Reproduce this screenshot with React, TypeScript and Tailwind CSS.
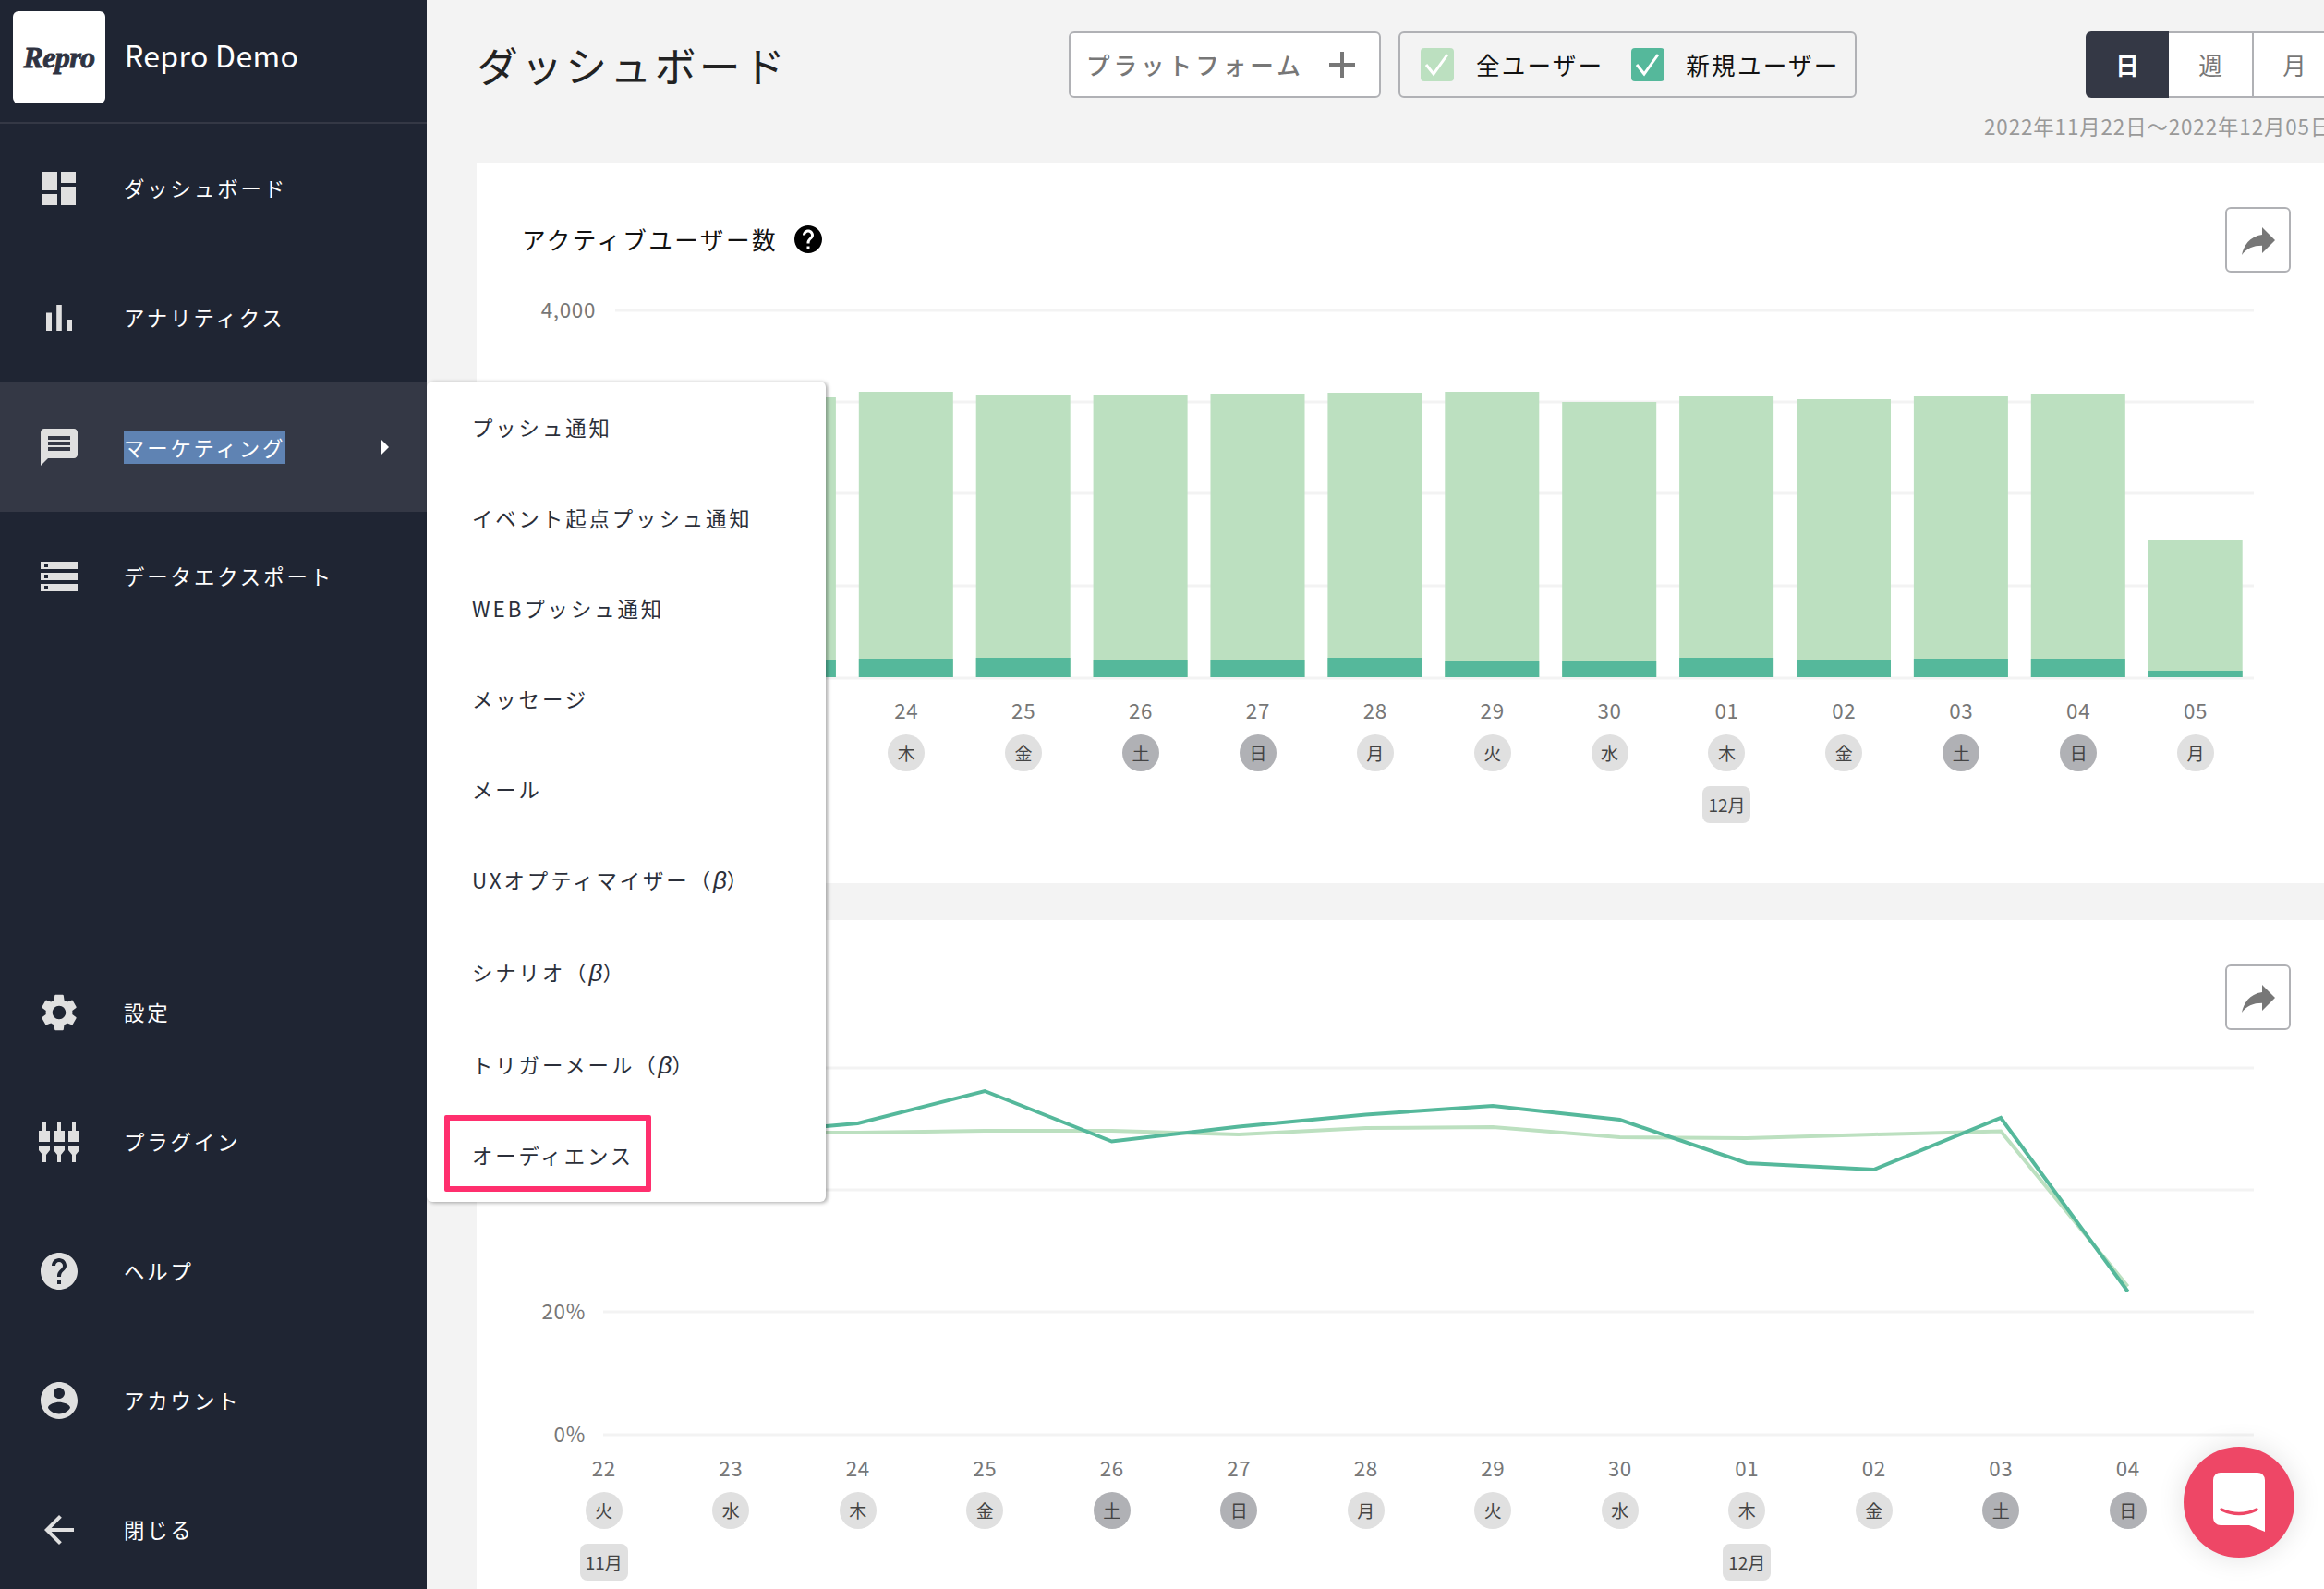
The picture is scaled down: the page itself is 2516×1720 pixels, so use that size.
import type { ReactNode } from "react"

// material icon paths, 24 unit box
const icons = {
  dashboard: "M3 13h8V3H3v10zm0 8h8v-6H3v6zm10 0h8V11h-8v10zm0-18v6h8V3h-8z",
  bars: "M5 9.2h3V19H5zM10.6 5h2.8v14h-2.8zm5.6 8H19v6h-2.8z",
  chat: "M20 2H4c-1.1 0-1.99.9-1.99 2L2 22l4-4h14c1.1 0 2-.9 2-2V4c0-1.1-.9-2-2-2zM6 14h12v-2H6v2zm0-3h12V9H6v2zm0-3h12V6H6v2z",
  storage: "M2 20h20v-4H2v4zm2-3h2v2H4v-2zM2 4v4h20V4H2zm4 3H4V5h2v2zm-4 7h20v-4H2v4zm2-3h2v2H4v-2z",
  settings: "M19.14 12.94c.04-.3.06-.61.06-.94 0-.32-.02-.64-.07-.94l2.03-1.58c.18-.14.23-.41.12-.61l-1.92-3.32c-.12-.22-.37-.29-.59-.22l-2.39.96c-.5-.38-1.03-.7-1.62-.94l-.36-2.54c-.04-.24-.24-.41-.48-.41h-3.84c-.24 0-.43.17-.47.41l-.36 2.54c-.59.24-1.13.57-1.62.94l-2.39-.96c-.22-.08-.47 0-.59.22L2.74 8.87c-.12.21-.08.47.12.61l2.03 1.58c-.05.3-.09.63-.09.94s.02.64.07.94l-2.03 1.58c-.18.14-.23.41-.12.61l1.92 3.32c.12.22.37.29.59.22l2.39-.96c.5.38 1.03.7 1.62.94l.36 2.54c.05.24.24.41.48.41h3.84c.24 0 .44-.17.47-.41l.36-2.54c.59-.24 1.13-.56 1.62-.94l2.39.96c.22.08.47 0 .59-.22l1.92-3.32c.12-.22.07-.47-.12-.61l-2.01-1.58zM12 15.6c-1.98 0-3.6-1.62-3.6-3.6s1.62-3.6 3.6-3.6 3.6 1.62 3.6 3.6-1.62 3.6-3.6 3.6z",
  help: "M12 2C6.48 2 2 6.48 2 12s4.48 10 10 10 10-4.48 10-10S17.52 2 12 2zm1 17h-2v-2h2v2zm2.07-7.75l-.9.92C13.45 12.9 13 13.5 13 15h-2v-.5c0-1.1.45-2.1 1.17-2.83l1.24-1.26c.37-.36.59-.86.59-1.41 0-1.1-.9-2-2-2s-2 .9-2 2H8c0-2.21 1.79-4 4-4s4 1.79 4 4c0 .88-.36 1.68-.93 2.25z",
  account: "M12 2C6.48 2 2 6.48 2 12s4.48 10 10 10 10-4.48 10-10S17.52 2 12 2zm0 3c1.66 0 3 1.34 3 3s-1.34 3-3 3-3-1.34-3-3 1.34-3 3-3zm0 14.2c-2.5 0-4.71-1.28-6-3.22.03-1.99 4-3.08 6-3.08 1.99 0 5.97 1.09 6 3.08-1.29 1.94-3.5 3.22-6 3.22z",
  back: "M20 11H7.83l5.59-5.59L12 4l-8 8 8 8 1.41-1.41L7.83 13H20v-2z",
  share: "M14 9V5l7 7-7 7v-4.1c-5 0-8.5 1.6-11 5.1 1-5 4-10 11-11z",
}

function Icon({ d, className }: { d: string; className: string }) {
  return (
    <svg viewBox="0 0 24 24" className={className} fill="currentColor">
      <path d={d} fillRule="evenodd" />
    </svg>
  )
}

function PluginIcon() {
  const plug = "M4 0h4v10h4v12H0V10h4zM0 26h12v5l-4 5v8H4v-8l-4-5z"
  return (
    <svg viewBox="0 0 44 44" className="w-[44px] h-[44px]" fill="currentColor">
      <path d={plug} />
      <path d={plug} transform="translate(16 0)" />
      <path d={plug} transform="translate(32 0)" />
    </svg>
  )
}

function NavRow({ icon, label, active }: { icon: ReactNode; label: string; active?: boolean }) {
  return (
    <div className={`flex items-center h-[140px] pl-[40px] ${active ? "bg-[#343845]" : ""}`}>
      <div className="w-[48px] h-[48px] flex items-center justify-center text-[#e0e0e0]">{icon}</div>
      <span
        className={`ml-[46px] text-[22.4px] tracking-[0.13em] text-white ${
          active ? "inline-block leading-[36px] bg-[#5f83b3]" : ""
        }`}
      >
        {label}
      </span>
      {active && (
        <svg viewBox="0 0 8 16" className="w-[8px] h-[16px] ml-[104px] text-white" fill="currentColor">
          <path d="M0 0l8 8-8 8z" />
        </svg>
      )}
    </div>
  )
}

function Sidebar() {
  const big = "w-[48px] h-[48px]"
  return (
    <aside className="w-[462px] shrink-0 h-[1720px] bg-[#1f2533] overflow-hidden">
      <div className="flex items-center h-[134px] border-b-2 border-[#343845] pl-[14px] pb-[8px]">
        <div className="w-[100px] h-[100px] bg-white rounded-[6px] flex items-center justify-center">
          <span className="font-['Liberation_Serif',serif] italic font-bold text-[32px] tracking-[-0.02em] text-[#2f3342] [-webkit-text-stroke:1px_#2f3342]">
            Repro
          </span>
        </div>
        <span className="ml-[21px] -mt-[6px] text-[32px] tracking-[0.01em] text-white">Repro Demo</span>
      </div>
      <NavRow icon={<Icon d={icons.dashboard} className={big} />} label="ダッシュボード" />
      <NavRow icon={<Icon d={icons.bars} className={big} />} label="アナリティクス" />
      <NavRow icon={<Icon d={icons.chat} className={big} />} label="マーケティング" active />
      <NavRow icon={<Icon d={icons.storage} className={big} />} label="データエクスポート" />
      <div className="mt-[332px]">
        <NavRow icon={<Icon d={icons.settings} className={big} />} label="設定" />
        <NavRow icon={<PluginIcon />} label="プラグイン" />
        <NavRow icon={<Icon d={icons.help} className={big} />} label="ヘルプ" />
        <NavRow icon={<Icon d={icons.account} className={big} />} label="アカウント" />
        <NavRow icon={<Icon d={icons.back} className={big} />} label="閉じる" />
      </div>
    </aside>
  )
}

function Check({ color }: { color: string }) {
  return (
    <span className={`w-[36px] h-[36px] shrink-0 rounded-[4px] flex items-center justify-center ${color}`}>
      <svg viewBox="0 0 36 36" className="w-[36px] h-[36px]" fill="none" stroke="white" strokeWidth="3">
        <path d="M6 18l8 10 15-21" />
      </svg>
    </span>
  )
}

function Header() {
  return (
    <header className="flex h-[176px] pt-[34px]">
      <h1 className="w-[641px] shrink-0 h-[72px] leading-[72px] text-[44.8px] tracking-[0.075em] text-[#222] whitespace-nowrap">
        ダッシュボード
      </h1>
      <button className="w-[338px] shrink-0 h-[72px] bg-white border-2 border-[#b0b1b5] rounded-[6px] flex items-center pl-[17px]">
        <span className="text-[25.6px] tracking-[0.155em] font-medium text-[#777] whitespace-nowrap">プラットフォーム</span>
        <svg viewBox="0 0 30 30" className="w-[30px] h-[30px] ml-[26px]" fill="#777">
          <path d="M13 1h4v12h12v4H17v12h-4V17H1v-4h12z" />
        </svg>
      </button>
      <div className="ml-[19px] w-[496px] shrink-0 h-[72px] border-2 border-[#b0b1b5] rounded-[6px] flex items-center pl-[22px] whitespace-nowrap">
        <Check color="bg-[#bce0c0]" />
        <span className="ml-[24px] text-[25.6px] tracking-[0.085em] text-[#111]">全ユーザー</span>
        <span className="ml-[30px]">
          <Check color="bg-[#55b89b]" />
        </span>
        <span className="ml-[23px] text-[25.6px] tracking-[0.085em] text-[#111]">新規ユーザー</span>
      </div>
      <div className="ml-[138px] w-[400px] shrink-0">
        <div className="flex ml-[110px] h-[72px] text-[25.6px]">
          <div className="w-[90px] shrink-0 bg-[#343845] rounded-l-[6px] flex items-center justify-center text-white font-bold">日</div>
          <div className="w-[92px] shrink-0 bg-white border-y-2 border-r-2 border-[#b0b1b5] flex items-center justify-center text-[#777]">週</div>
          <div className="w-[88px] shrink-0 bg-white border-y-2 border-[#b0b1b5] flex items-center justify-center text-[#777]">月</div>
        </div>
        <p className="mt-[15px] text-[22.4px] tracking-[0.04em] leading-[30px] text-[#999] whitespace-nowrap">2022年11月22日〜2022年12月05日</p>
      </div>
    </header>
  )
}

function ShareButton() {
  return (
    <button className="w-[71px] h-[71px] bg-white border-2 border-[#b0b1b5] rounded-[6px] flex items-center justify-center text-[#777]">
      <Icon d={icons.share} className="w-[48px] h-[48px]" />
    </button>
  )
}

type Day = { d: string; w: string; month?: string }

const days: Day[] = [
  { d: "22", w: "火", month: "11月" },
  { d: "23", w: "水" },
  { d: "24", w: "木" },
  { d: "25", w: "金" },
  { d: "26", w: "土" },
  { d: "27", w: "日" },
  { d: "28", w: "月" },
  { d: "29", w: "火" },
  { d: "30", w: "水" },
  { d: "01", w: "木", month: "12月" },
  { d: "02", w: "金" },
  { d: "03", w: "土" },
  { d: "04", w: "日" },
  { d: "05", w: "月" },
]

function DayLabels({ items, colClass }: { items: Day[]; colClass: string }) {
  return (
    <div className="flex mt-[16px]">
      {items.map((day) => (
        <div key={day.d} className={`${colClass} shrink-0 flex flex-col items-center`}>
          <span className="h-[32px] leading-[32px] text-[22.4px] tracking-[0.03em] text-[#777]">{day.d}</span>
          <span
            className={`mt-[11px] w-[40px] h-[40px] rounded-full flex items-center justify-center text-[19px] text-[#444] ${
              day.w === "土" || day.w === "日" ? "bg-[#b0b1b5]" : "bg-[#e0e0e0]"
            }`}
          >
            {day.w}
          </span>
          {day.month && (
            <span className="mt-[16px] w-[52px] h-[40px] rounded-[8px] bg-[#e0e0e0] flex items-center justify-center text-[19px] text-[#444]">
              {day.month}
            </span>
          )}
        </div>
      ))}
    </div>
  )
}

// bar tops, real page y minus the plot top (336)
const barTotal = [94, 94, 88, 92, 92, 91, 89, 88, 99, 93, 96, 93, 91, 248]
const barNew = [378, 378, 377, 376, 378, 378, 376, 379, 380, 376, 378, 377, 377, 390]

function BarPlot() {
  return (
    <svg viewBox="0 0 1774 400" className="w-[1774px] h-[400px] block overflow-visible">
      {[0, 99, 198, 298, 398].map((y) => (
        <line key={y} x1="0" x2="1774" y1={y} y2={y} stroke="#f3f3f3" strokeWidth="3" />
      ))}
      {barTotal.map((top, i) => (
        <g key={i}>
          <rect x={10 + i * 126.9} y={top} width="102" height={397 - top} fill="#bce0c0" />
          <rect x={10 + i * 126.9} y={barNew[i]} width="102" height={397 - barNew[i]} fill="#55b89b" />
        </g>
      ))}
    </svg>
  )
}

const lineTotal = [70, 70, 70, 68, 68, 72, 65, 64, 75, 76, 72, 68.5, 236.5]
const lineNew = [84, 72, 60, 25, 79.5, 63.5, 50.5, 41, 56, 103, 110, 54, 242]

const toPoints = (ys: number[]) => ys.map((y, i) => `${0.6 + i * 137.5},${y}`).join(" ")

function LinePlot() {
  return (
    <svg viewBox="0 0 1787 400" className="w-[1787px] h-[400px] block overflow-visible">
      {[0, 132, 264, 397].map((y) => (
        <line key={y} x1="0" x2="1787" y1={y} y2={y} stroke="#f3f3f3" strokeWidth="3" />
      ))}
      <polyline points={toPoints(lineTotal)} fill="none" stroke="#bce0c0" strokeWidth="4" />
      <polyline points={toPoints(lineNew)} fill="none" stroke="#55b89b" strokeWidth="4" />
    </svg>
  )
}

function ActiveUsersCard() {
  return (
    <section className="w-[2100px] h-[780px] bg-white pt-[48px]">
      <div className="flex items-center justify-between h-[71px] pl-[49px] w-[1964px]">
        <div className="flex items-center">
          <span className="text-[25.6px] tracking-[0.095em] text-[#111]">アクティブユーザー数</span>
          <Icon d={icons.help} className="w-[36px] h-[36px] ml-[15px] text-black" />
        </div>
        <ShareButton />
      </div>
      <div className="flex mt-[41px]">
        {/* the lower axis labels sit behind the open menu */}
        <div className="w-[129px] shrink-0 -mt-[18px] text-right text-[22.4px] tracking-[0.03em] leading-[32px] text-[#777]">
          4,000
        </div>
        <div className="ml-[21px]">
          <BarPlot />
          <div className="ml-[251.8px]">
            <DayLabels items={days.slice(2)} colClass="w-[126.9px]" />
          </div>
        </div>
      </div>
    </section>
  )
}

function RetentionCard() {
  return (
    <section className="w-[2100px] h-[724px] mt-[40px] bg-white pt-[48px]">
      <div className="flex justify-end h-[71px] w-[1964px]">
        <ShareButton />
      </div>
      <div className="flex mt-[41px]">
        <div className="w-[118px] shrink-0 mt-[246px] h-[165px] flex flex-col justify-between items-end text-[22.4px] tracking-[0.03em] leading-[32px] text-[#777]">
          <span>20%</span>
          <span>0%</span>
        </div>
        <div className="ml-[19px]">
          <LinePlot />
          <div className="-ml-[68px]">
            <DayLabels items={days.slice(0, 13)} colClass="w-[137.5px]" />
          </div>
        </div>
      </div>
    </section>
  )
}

const menuItems: { label: string; beta?: boolean }[] = [
  { label: "プッシュ通知" },
  { label: "イベント起点プッシュ通知" },
  { label: "WEBプッシュ通知" },
  { label: "メッセージ" },
  { label: "メール" },
  { label: "UXオプティマイザー", beta: true },
  { label: "シナリオ", beta: true },
  { label: "トリガーメール", beta: true },
]

function MarketingMenu() {
  return (
    <div className="absolute left-[462px] top-[413px] w-[432px] h-[888px] bg-white rounded-[6px] shadow-[2px_1px_4px_rgba(0,0,0,0.35)] text-[22.4px] tracking-[0.13em] text-[#2b2f3a]">
      {menuItems.map((item) => (
        <div key={item.label} className={`flex items-center pl-[49px] whitespace-nowrap ${item.beta ? "h-[100px]" : "h-[98px] pt-[1px]"}`}>
          {item.label}
          {item.beta && (
            <>
              （<span className="font-['Liberation_Sans',sans-serif] italic text-[26px] tracking-normal">β</span>）
            </>
          )}
        </div>
      ))}
      <div className="ml-[19px] mt-[4px] w-[224px] h-[83px] border-[6px] border-[#ff2f6e] rounded-[2px] flex items-center pl-[24px] pt-[4px] whitespace-nowrap">
        オーディエンス
      </div>
    </div>
  )
}

function ChatButton() {
  return (
    <button className="absolute right-[32px] bottom-[34px] w-[120px] h-[120px] rounded-full bg-[#ee4766] shadow-[0_0_30px_rgba(0,0,0,0.12)] flex items-center justify-center">
      <svg viewBox="0 0 56 64" className="w-[56px] h-[64px]">
        <path d="M8 0h40a8 8 0 0 1 8 8v56l-17-7H8a8 8 0 0 1-8-8V8a8 8 0 0 1 8-8z" fill="white" />
        <path d="M9 40q19 9 38 0" fill="none" stroke="#ee4766" strokeWidth="3.5" strokeLinecap="round" />
      </svg>
    </button>
  )
}

export default function App() {
  return (
    <div className="relative w-[2516px] h-[1720px] overflow-hidden flex bg-[#f3f3f3] antialiased font-['Noto_Sans_CJK_JP','Noto_Sans',sans-serif]">
      <Sidebar />
      <main className="flex-1 min-w-0 h-[1720px] overflow-hidden pl-[54px]">
        <Header />
        <ActiveUsersCard />
        <RetentionCard />
      </main>
      <MarketingMenu />
      <ChatButton />
    </div>
  )
}
